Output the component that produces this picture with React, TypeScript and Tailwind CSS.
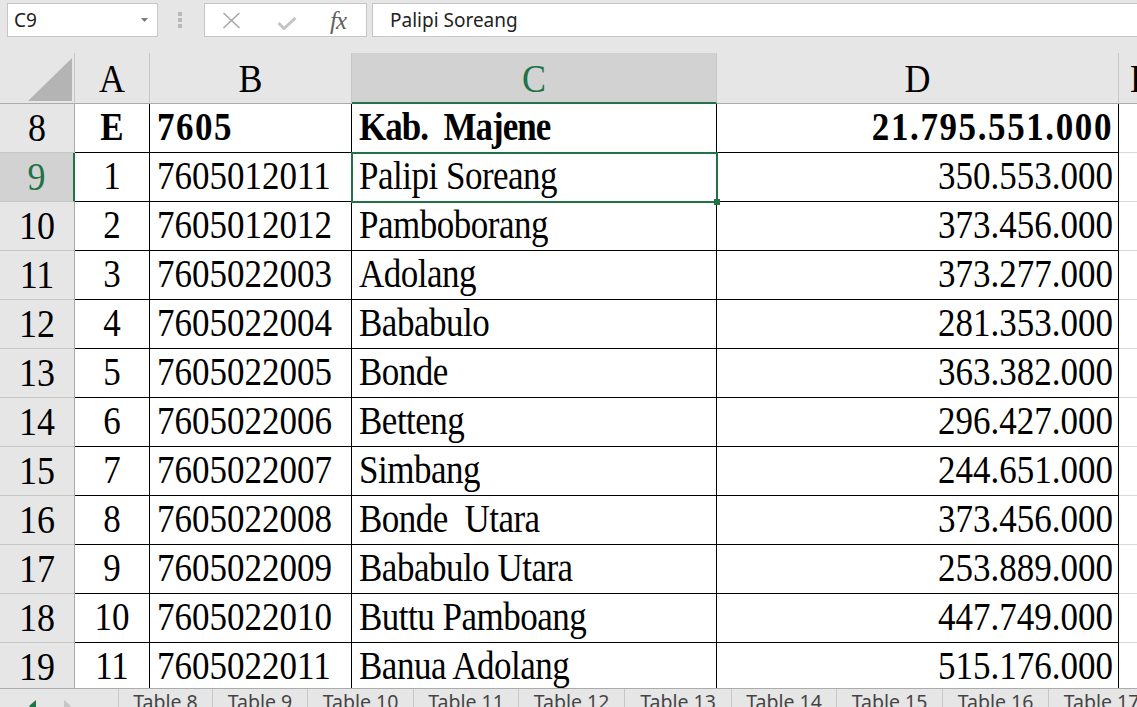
import React from 'react';

type Row = { n: string; a: string; b: string; c: string; d: string; bold?: boolean; sel?: boolean };

const rows: Row[] = [
  { n: '8', a: 'E', b: '7605', c: 'Kab.  Majene', d: '21.795.551.000', bold: true },
  { n: '9', a: '1', b: '7605012011', c: 'Palipi Soreang', d: '350.553.000', sel: true },
  { n: '10', a: '2', b: '7605012012', c: 'Pamboborang', d: '373.456.000' },
  { n: '11', a: '3', b: '7605022003', c: 'Adolang', d: '373.277.000' },
  { n: '12', a: '4', b: '7605022004', c: 'Bababulo', d: '281.353.000' },
  { n: '13', a: '5', b: '7605022005', c: 'Bonde', d: '363.382.000' },
  { n: '14', a: '6', b: '7605022006', c: 'Betteng', d: '296.427.000' },
  { n: '15', a: '7', b: '7605022007', c: 'Simbang', d: '244.651.000' },
  { n: '16', a: '8', b: '7605022008', c: 'Bonde  Utara', d: '373.456.000' },
  { n: '17', a: '9', b: '7605022009', c: 'Bababulo Utara', d: '253.889.000' },
  { n: '18', a: '10', b: '7605022010', c: 'Buttu Pamboang', d: '447.749.000' },
  { n: '19', a: '11', b: '7605022011', c: 'Banua Adolang', d: '515.176.000' },
];

const tabs = [
  { name: 'Table 8', w: 'w-[94px]' },
  { name: 'Table 9', w: 'w-[95px]' },
  { name: 'Table 10', w: 'w-[106px]' },
  { name: 'Table 11', w: 'w-[105px]' },
  { name: 'Table 12', w: 'w-[106px]' },
  { name: 'Table 13', w: 'w-[107px]' },
  { name: 'Table 14', w: 'w-[105px]' },
  { name: 'Table 15', w: 'w-[106px]' },
  { name: 'Table 16', w: 'w-[106px]' },
  { name: 'Table 17', w: 'w-[106px]' },
];

const T = ({ children, className = '' }: { children: React.ReactNode; className?: string }) => (
  <span className={`inline-block leading-none scale-y-[1.14] whitespace-pre ${className}`}>{children}</span>
);

function FormulaBar() {
  return (
    <div className="h-[53px] shrink-0 flex items-start pt-[3px] pl-[7px] font-['Noto_Sans',sans-serif] overflow-hidden">
      <div className="shrink-0 w-[151px] h-[34px] bg-white border border-[#c6c6c6] flex items-center pl-[6px] pr-[9px] justify-between">
        <span className="text-[19px] text-[#222] leading-none">C9</span>
        <svg width="7" height="4" viewBox="0 0 7 4">
          <path d="M0 0 L7 0 L3.5 4 Z" fill="#7a7a7a" />
        </svg>
      </div>
      <div className="shrink-0 ml-[20px] mt-[9px] flex flex-col gap-[2px]">
        <div className="w-[4px] h-[4px] bg-[#b8b8b8]" />
        <div className="w-[4px] h-[4px] bg-[#b8b8b8]" />
        <div className="w-[4px] h-[4px] bg-[#b8b8b8]" />
      </div>
      <div className="shrink-0 ml-[22px] w-[163px] h-[34px] bg-white border border-[#c6c6c6] flex items-center">
        <svg className="shrink-0 ml-[17px]" width="19" height="17" viewBox="0 0 19 17">
          <path d="M1.5 1 L17.5 16 M17.5 1 L1.5 16" stroke="#a8a8a8" strokeWidth="1.6" fill="none" />
        </svg>
        <svg className="shrink-0 ml-[36px] mt-[6px]" width="20" height="13" viewBox="0 0 20 13">
          <path d="M1.5 6 L7 11.5 L18.5 1" stroke="#c4c4c4" strokeWidth="3" fill="none" />
        </svg>
        <span className="ml-[33px] font-['Liberation_Serif',serif] italic text-[25px] leading-none text-[#5f5f5f] tracking-[-1px]">
          fx
        </span>
      </div>
      <div className="shrink-0 ml-[5px] w-[800px] h-[34px] bg-white border border-[#c6c6c6] flex items-center pl-[17px]">
        <span className="text-[19px] text-[#222] leading-none">Palipi Soreang</span>
      </div>
    </div>
  );
}

function HeaderRow() {
  const base = "shrink-0 h-[51px] border-r border-[#c6c6c6] border-b border-b-[#ababab] bg-[#e6e6e6] flex items-center justify-center text-[36px] text-black";
  return (
    <div className="flex">
      <div className="shrink-0 w-[75px] h-[51px] border-r border-[#c6c6c6] border-b border-b-[#ababab] bg-[#e6e6e6] relative">
        <svg className="absolute left-0 top-0" width="75" height="51" viewBox="0 0 75 51">
          <path d="M72 5 L72 48 L28 48 Z" fill="#b4b4b4" />
        </svg>
      </div>
      <div className={`${base} w-[75px]`}><T>A</T></div>
      <div className={`${base} w-[202px]`}><T>B</T></div>
      <div className="shrink-0 w-[365px] h-[51px] border-r border-[#c6c6c6] border-b-2 border-b-[#217346] bg-[#d2d2d2] flex items-center justify-center text-[36px] text-[#217346]"><T>C</T></div>
      <div className={`${base} w-[402px]`}><T>D</T></div>
      <div className={`${base} w-[44px] border-r-0`}><T>E</T></div>
    </div>
  );
}

function DataRow({ r }: { r: Row }) {
  const cell = "shrink-0 h-[49px] border-r border-b border-black flex items-center pb-[3px] text-[35px] text-black";
  const bold = r.bold ? 'font-bold' : '';
  return (
    <div className="flex">
      <div
        className={
          r.sel
            ? "shrink-0 w-[75px] h-[49px] border-r-2 border-r-[#217346] border-b border-b-[#c6c6c6] bg-[#d2d2d2] flex items-center justify-center pb-[2px] text-[36px] text-[#217346]"
            : "shrink-0 w-[75px] h-[49px] border-r border-r-[#ababab] border-b border-b-[#c6c6c6] bg-[#e6e6e6] flex items-center justify-center pb-[2px] text-[36px] text-black"
        }
      >
        <T>{r.n}</T>
      </div>
      <div className={`${cell} w-[75px] justify-center`}><T className={bold}>{r.a}</T></div>
      <div className={`${cell} w-[202px] pl-[7px]`}>
        <T className={r.bold ? 'font-bold tracking-[1.5px]' : ''}>{r.b}</T>
      </div>
      <div className={`${cell} w-[365px] pl-[7px] relative`}>
        <T className={r.bold ? 'font-bold tracking-[-1px]' : 'tracking-[-0.5px]'}>{r.c}</T>
        {r.sel && (
          <div className="absolute -left-[1px] -top-[1px] -right-[2px] -bottom-[2px] border-2 border-[#217346] z-10">
            <div className="absolute -right-[4px] -bottom-[4px] w-[6px] h-[6px] bg-[#217346]" />
          </div>
        )}
      </div>
      <div className={`${cell} w-[402px] justify-end pr-[5px]`}>
        <T className={r.bold ? 'font-bold tracking-[1.6px]' : ''}>{r.d}</T>
      </div>
      <div className="shrink-0 w-[44px] h-[49px] border-b border-[#d9d9d9] bg-white" />
    </div>
  );
}

function TabBar() {
  return (
    <div className="h-[19px] shrink-0 border-t border-[#ababab] bg-[#e6e6e6] flex font-['Noto_Sans',sans-serif] overflow-hidden">
      <div className="w-[118px] shrink-0 relative">
        <svg className="absolute left-[29px] top-[11px]" width="7" height="12" viewBox="0 0 7 12">
          <path d="M7 0 L7 12 L0 6 Z" fill="#217346" />
        </svg>
        <svg className="absolute left-[64px] top-[11px]" width="7" height="12" viewBox="0 0 7 12">
          <path d="M0 0 L0 12 L7 6 Z" fill="#c6c6c6" />
        </svg>
      </div>
      {tabs.map((t) => (
        <div key={t.name} className={`${t.w} shrink-0 border-l border-[#c6c6c6] flex justify-center pt-[3px]`}>
          <span className="text-[19.5px] leading-none text-[#444] whitespace-nowrap">{t.name}</span>
        </div>
      ))}
    </div>
  );
}

export default function App() {
  return (
    <div className="w-[1137px] h-[707px] overflow-hidden bg-[#e6e6e6] flex flex-col">
      <FormulaBar />
      <div className="flex-1 overflow-hidden bg-white font-['Liberation_Serif',serif]">
        <div className="w-[1200px]">
          <HeaderRow />
          {rows.map((r) => (
            <DataRow key={r.n} r={r} />
          ))}
        </div>
      </div>
      <TabBar />
    </div>
  );
}
